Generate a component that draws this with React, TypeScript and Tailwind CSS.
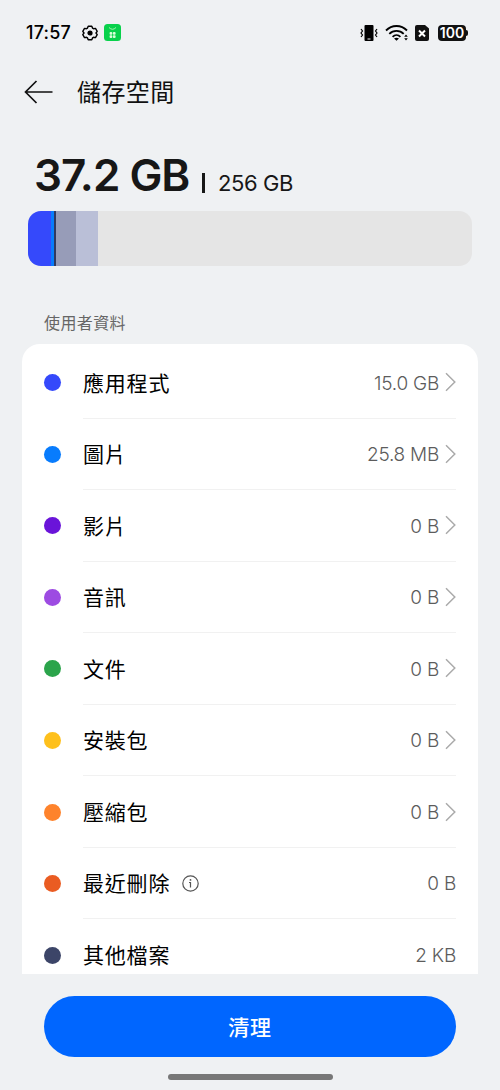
import { clsx } from 'clsx';

type Item = {
  label: string;
  size: string;
  dot: string;
  info?: boolean;
  link?: boolean;
};

const items: Item[] = [
  { label: '應用程式', size: '15.0 GB', dot: 'bg-[#3549fb]', link: true },
  { label: '圖片', size: '25.8 MB', dot: 'bg-[#087cfd]', link: true },
  { label: '影片', size: '0 B', dot: 'bg-[#6a14d9]', link: true },
  { label: '音訊', size: '0 B', dot: 'bg-[#9d4be2]', link: true },
  { label: '文件', size: '0 B', dot: 'bg-[#2ba44b]', link: true },
  { label: '安裝包', size: '0 B', dot: 'bg-[#fec01c]', link: true },
  { label: '壓縮包', size: '0 B', dot: 'bg-[#fe832c]', link: true },
  { label: '最近刪除', size: '0 B', dot: 'bg-[#ea5c22]', info: true },
  { label: '其他檔案', size: '2 KB', dot: 'bg-[#3c4568]' },
];

function StatusBar() {
  return (
    <div className="flex h-[65px] items-center pr-[32px] pl-[26px] text-black">
      <span className="w-[57px] text-[18px] font-medium tracking-[0.2px] whitespace-nowrap">17:57</span>
      <svg className="-ml-px h-4 w-4" viewBox="0 0 16 16" fill="none" stroke="currentColor" strokeWidth="1.4" strokeLinejoin="round">
        <path d="M6.200 1.200h3.600l.7 1.900 1 .6 2-.3 1.700 2.900L14 8l1.200 1.700-1.700 2.900-2-.3-1 .6-.7 1.900H6.200l-.7-1.900-1-.6-2 .3L.8 9.700 2 8 .8 6.300l1.700-2.900 2 .3 1-.6z" />
        <circle cx="8" cy="8" r="1.9" fill="currentColor" />
      </svg>
      <svg className="ml-[6px] h-[17px] w-[17px]" viewBox="0 0 17 17">
        <rect width="17" height="17" rx="3.5" fill="#08d14b" />
        <path d="M5 3.5Q8.500 7 12 3.5" fill="none" stroke="#a5f5ae" strokeWidth="1" />
        <g fill="#d8ffd8">
          <rect x="5.6" y="8" width="2.7" height="2.7" rx=".9" />
          <rect x="8.9" y="8" width="2.7" height="2.7" rx=".9" />
          <rect x="5.6" y="11.2" width="2.7" height="2.7" rx=".9" />
          <rect x="8.9" y="11.2" width="2.7" height="2.7" rx=".9" />
        </g>
      </svg>
      <div className="ml-auto flex items-center">
        <svg className="h-[18px] w-[18px]" viewBox="0 0 18 18" fill="none" stroke="currentColor">
          <rect x="4.5" y="1" width="9" height="16" rx="1" fill="currentColor" stroke="none" />
          <path d="M7.500 15h3" stroke="#eff1f3" />
          <path d="M1 5l1.500 2L1 9l1.500 2L1 13M17 5l-1.500 2L17 9l-1.500 2 1.500 2" strokeWidth="1.2" />
        </svg>
        <svg className="ml-[7px] h-[17px] w-[24px]" viewBox="0 0 24 17" fill="none" stroke="currentColor" strokeWidth="1.8">
          <path d="M1 6.500c5.800-6 15.200-6 21 0M4.300 9.800c4-4 10.400-4 14.400 0M7.600 12.800c2.200-2.200 5.600-2.200 7.800 0" />
          <path d="M9 14.500q2.500-1.500 5 0l-2.500 2.300z" fill="currentColor" stroke="none" />
          <path d="M19.200 12.700l1.800-2.200 1.800 2.200zM19.200 14.200l1.800 2.200 1.800-2.200z" fill="currentColor" stroke="none" />
        </svg>
        <svg className="ml-[6px] h-[16px] w-[14px]" viewBox="0 0 14 16">
          <path d="M2 0h8l4 3.500V14a2 2 0 0 1-2 2H2a2 2 0 0 1-2-2V2a2 2 0 0 1 2-2z" fill="#111" />
          <path d="M4 5.500l6 6m0-6l-6 6" stroke="#fff" strokeWidth="2" />
        </svg>
        <div className="ml-[9px] flex h-4 w-[28px] items-center justify-center rounded-[4px] bg-[#111] text-[14px] leading-none font-semibold text-white">
          100
        </div>
        <div className="h-[6px] w-[2px] rounded-r-full bg-[#111]" />
      </div>
    </div>
  );
}

function Row({ item, last }: { item: Item; last: boolean }) {
  return (
    <div className="flex h-[71.55px] shrink-0 items-center px-[22px]">
      <span className={clsx('mr-[22px] h-[17px] w-[17px] shrink-0 rounded-full', item.dot)} />
      <div className={clsx('flex h-full grow items-center border-b', last ? 'border-transparent' : 'border-[#f1f1f1]')}>
        <span className="pt-[2px] text-[21px] tracking-[0.8px] text-black">{item.label}</span>
        {item.info && (
          <svg className="mt-px ml-[12px] h-[17px] w-[17px] text-[#555]" viewBox="0 0 17 17" fill="none" stroke="currentColor" strokeWidth="1.2">
            <circle cx="8.5" cy="8.5" r="7.7" />
            <path d="M7 7.500h1.500v5" />
            <circle cx="8.5" cy="4.9" r=".9" fill="currentColor" stroke="none" />
          </svg>
        )}
        <span className="ml-auto pt-[3px] text-[19px] font-light tracking-[-0.25px] text-[#5c5c5c]">{item.size}</span>
        {item.link && (
          <svg className="ml-[6px] h-5 w-[11px]" viewBox="0 0 11 20" fill="none" stroke="#aaa" strokeWidth="1.5">
            <path d="M1 1.300L9.800 10 1 18.700" />
          </svg>
        )}
      </div>
    </div>
  );
}

export default function App() {
  return (
    <div className="flex h-[1090px] w-[500px] flex-col overflow-hidden bg-[#eff1f3] font-['Inter','Noto_Sans_CJK_TC',sans-serif]">
      <StatusBar />
      <header className="flex h-[54px] items-center pl-[24px]">
        <svg className="h-6 w-[29px]" viewBox="0 0 29 24" fill="none" stroke="#111" strokeWidth="1.7">
          <path d="M12.500 1L1.500 12l11 11M1.500 12h27" />
        </svg>
        <h1 className="ml-[24px] pt-[2px] text-[24px] tracking-[0.4px] text-[#111]">儲存空間</h1>
      </header>

      <div className="mt-[29px] flex h-[55px] items-baseline pl-[34px] text-[#171717]">
        <span className="w-[168px] text-[44px] leading-[55px] font-semibold tracking-[-1px] whitespace-nowrap">37.2 GB</span>
        <span className="h-[20px] w-[3px] translate-y-[2px] bg-[#171717]" />
        <span className="ml-[13px] text-[22px] tracking-[-0.4px] whitespace-nowrap">256 GB</span>
      </div>

      <div className="mx-[28px] mt-[8px] flex h-[55px] shrink-0 overflow-hidden rounded-[13px] bg-[#e5e5e5]">
        <div className="w-[23px] bg-[#3549fb]" />
        <div className="w-[3px] bg-[#087cfd]" />
        <div className="w-[2px] bg-[#303a62]" />
        <div className="w-[20px] bg-[#979cb8]" />
        <div className="w-[22px] bg-[#babfd7]" />
      </div>

      <h2 className="mt-[46px] pl-[44px] text-[16px] leading-[22px] tracking-[0.4px] text-[#666]">使用者資料</h2>
      <div className="mx-[22px] mt-[10px] flex h-[630px] shrink-0 flex-col overflow-hidden rounded-t-[18px] bg-white pt-[3px]">
        {items.map((item, i) => (
          <Row key={item.label} item={item} last={i === items.length - 1} />
        ))}
      </div>

      <div className="flex grow flex-col items-center pt-[22px]">
        <button className="h-[61px] w-[412px] rounded-full bg-[#0066ff] pt-[2px] text-[21px] font-medium tracking-[0.8px] text-white">清理</button>
        <div className="mt-[17px] h-[6px] w-[165px] rounded-full bg-[#777]" />
      </div>
    </div>
  );
}
